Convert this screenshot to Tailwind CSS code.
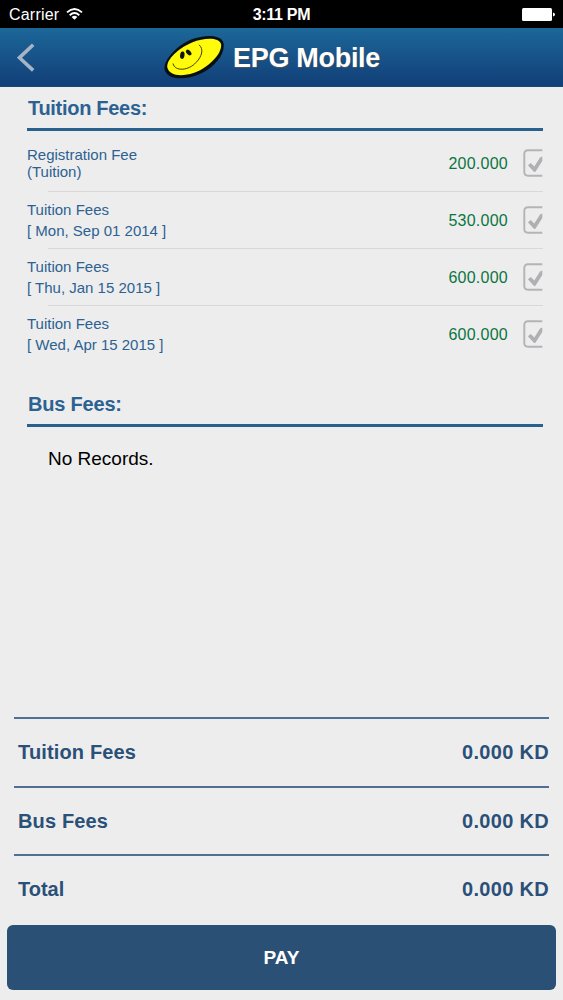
<!DOCTYPE html>
<html lang="en">
<head>
<meta charset="utf-8">
<title>EPG Mobile</title>
<script src="https://cdn.jsdelivr.net/npm/@tailwindcss/browser@4"></script>
</head>
<body class="flex h-[1000px] w-[563px] flex-col overflow-hidden bg-[#eeedee] font-['Liberation_Sans',Arial,sans-serif]">
<svg class="hidden">
  <symbol id="check" viewBox="0 0 20 28">
    <path d="M19.300 1.300H5Q1.300 1.300 1.300 5V23Q1.300 26.700 5 26.700H19.300" fill="none" stroke="#b4b3b5" stroke-width="1.900"/>
    <path d="M4.900 16.200L7.700 14L11.300 17.600L17 8.600L19.300 7.400V12L12.600 22.400Q11.600 23.400 10.600 22.500Z" fill="#b0afb1"/>
  </symbol>
</svg>

<div class="grid h-7 shrink-0 grid-cols-3 items-center bg-black px-2 pt-px text-base text-white">
  <div class="flex items-center gap-[7px]">
    <span class="pl-px tracking-[0.2px]">Carrier</span>
    <svg class="-mt-0.5 h-3 w-[17px]" viewBox="0 0 17 12" fill="none" stroke="#fff" stroke-width="1.9">
      <path d="M1 4.4Q8.5-2.2 16 4.4"/>
      <path d="M3.7 7.2Q8.5 2.9 13.3 7.2"/>
      <path d="M8.5 11.8L5.6 9Q8.5 6.6 11.4 9Z" fill="#fff" stroke="none"/>
    </svg>
  </div>
  <div class="text-center font-bold tracking-[-0.3px]">3:11 PM</div>
  <div class="flex justify-end">
    <svg class="h-[13px] w-[34px]" viewBox="0 0 34 13" fill="#fff"><rect x="1" width="30" height="13" rx="1.5"/><path d="M32 4.5Q34 5 34 6.5T32 8.5Z"/></svg>
  </div>
</div>

<header class="flex h-[59px] shrink-0 items-center border-b border-[#17477a] bg-linear-to-b from-[#1c6799] to-[#123f78]">
  <svg class="ml-[17px] h-[29px] w-[18px]" viewBox="0 0 18 29" fill="none" stroke="#a5b5c5" stroke-width="3.6"><path d="M16.2 1.7L2.5 14.7L16.2 27.4"/></svg>
  <svg class="ml-[129px] h-[44px] w-[60px]" viewBox="0 0 60 44">
    <path d="M.500 34C-.500 25 13 10.500 27 4.600C42-.500 57 -.500 59.500 8C61.500 18 52 31 38 38C23 45.500 3 46 .500 34Z" fill="#071014"/>
    <path d="M3.200 31.500C3 24 14 13.500 28 7.400C41 2.300 55 2.300 57 9C58.500 17 48 29 35.500 35.500C22 42.500 4 42 3.200 31.500Z" fill="#fffb0a"/>
    <ellipse cx="18.300" cy="20.200" rx="2.200" ry="3.700" transform="rotate(8 18.300 20.200)" fill="#10150a"/>
    <ellipse cx="24.700" cy="17.500" rx="2.100" ry="3.400" transform="rotate(-40 24.700 17.500)" fill="#10150a"/>
    <path d="M9 28.500C11 37 25 35.500 32 27.500C38 21.500 40 14 35 9.800" fill="none" stroke="#3c3c08" stroke-width="1"/>
  </svg>
  <h1 class="ml-[9px] pt-px text-[27px] leading-8 font-bold tracking-[-0.3px] text-white [text-shadow:0_1px_1px_#555]">EPG Mobile</h1>
</header>

<main class="flex-1 pr-5 pl-7 text-[#2b6291]">
  <section class="h-[296px]">
    <h2 class="-ml-px flex h-[44px] items-center border-b-[3px] border-[#27618f] pl-px text-xl font-bold tracking-[-0.3px]">Tuition Fees:</h2>
    <div class="flex h-[60px] items-center pt-1 text-[15px]">
      <div class="-ml-px flex-1 leading-[17px]">Registration Fee<br>(Tuition)</div>
      <div class="mr-[15px] pt-px text-base tracking-[0.25px] text-[#0b753f]">200.000</div>
      <svg class="h-7 w-5"><use href="#check"/></svg>
    </div>
    <div class="ml-5 h-px bg-[#d8d8da]"></div>
    <div class="flex h-[56px] items-center text-[15px]">
      <div class="-ml-px flex-1 leading-[21.5px]">Tuition Fees<br>[ Mon, Sep 01 2014 ]</div>
      <div class="mr-[15px] pt-0.5 text-base tracking-[0.25px] text-[#0b753f]">530.000</div>
      <svg class="h-7 w-5"><use href="#check"/></svg>
    </div>
    <div class="ml-5 h-px bg-[#d8d8da]"></div>
    <div class="flex h-[56px] items-center text-[15px]">
      <div class="-ml-px flex-1 leading-[21.5px]">Tuition Fees<br>[ Thu, Jan 15 2015 ]</div>
      <div class="mr-[15px] pt-0.5 text-base tracking-[0.25px] text-[#0b753f]">600.000</div>
      <svg class="h-7 w-5"><use href="#check"/></svg>
    </div>
    <div class="ml-5 h-px bg-[#d8d8da]"></div>
    <div class="flex h-[56px] items-center text-[15px]">
      <div class="-ml-px flex-1 leading-[21.5px]">Tuition Fees<br>[ Wed, Apr 15 2015 ]</div>
      <div class="mr-[15px] pt-0.5 text-base tracking-[0.25px] text-[#0b753f]">600.000</div>
      <svg class="h-7 w-5"><use href="#check"/></svg>
    </div>
  </section>
  <section>
    <h2 class="-ml-px flex h-[44px] items-center border-b-[3px] border-[#27618f] pl-px text-xl font-bold tracking-[-0.2px]">Bus Fees:</h2>
    <p class="pt-[18px] pl-5 text-[19px] leading-7 text-black">No Records.</p>
  </section>
</main>

<footer class="shrink-0 text-xl font-bold text-[#2b5078]">
  <div class="mx-3.5 flex h-[69px] items-center justify-between border-t-2 border-[#4f7092] pb-0.5 pl-1"><span class="tracking-[0.15px]">Tuition Fees</span><span class="tracking-[0.3px]">0.000 KD</span></div>
  <div class="mx-3.5 flex h-[68px] items-center justify-between border-t-2 border-[#4f7092] pl-1"><span class="tracking-[0.15px]">Bus Fees</span><span class="tracking-[0.3px]">0.000 KD</span></div>
  <div class="mx-3.5 flex h-[71px] items-center justify-between border-t-2 border-[#4f7092] pb-[3px] pl-1"><span>Total</span><span class="tracking-[0.3px]">0.000 KD</span></div>
  <button class="mx-[7px] mb-2.5 block h-[65px] w-[549px] rounded-md bg-[#2b5076] pt-0.5 text-[19px] font-bold text-white">PAY</button>
</footer>
</body>
</html>
